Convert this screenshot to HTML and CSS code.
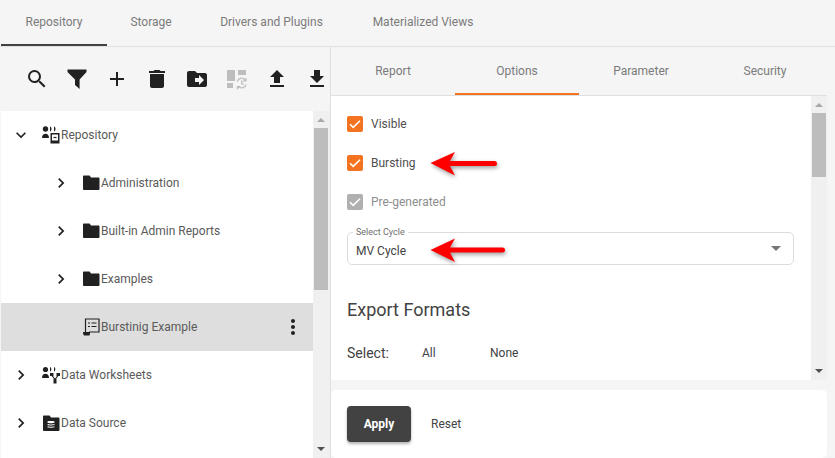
FILE: index.html
```html
<!DOCTYPE html>
<html lang="en">
<head>
<meta charset="utf-8">
<title>Repository</title>
<link rel="stylesheet" href="styles.css">
</head>
<body>
<nav class="top-tabs">
  <a class="top-tab active tw-106">Repository</a>
  <a class="top-tab tw-88">Storage</a>
  <a class="top-tab tw-153">Drivers and Plugins</a>
  <a class="top-tab tw-150">Materialized Views</a>
</nav>
<main class="main">
  <section class="left">
    <div class="toolbar">
      <svg class="tool" viewBox="0 0 24 24"><path d="M15.500 14h-.79l-.28-.27A6.470 6.470 0 0 0 16 9.500 6.500 6.500 0 1 0 9.500 16c1.610 0 3.090-.59 4.230-1.570l.27.28v.79l5 4.990L20.490 19l-4.990-5zm-6 0C7.010 14 5 11.990 5 9.500S7.010 5 9.500 5 14 7.010 14 9.500 11.990 14 9.500 14z"/></svg>
      <svg class="tool" viewBox="0 0 24 24"><path d="M2.500 2.500h19v2.600L14.600 12.500v9.500L10 18V12.500L2.500 5.100z"/></svg>
      <svg class="tool" viewBox="0 0 24 24"><path d="M19 13h-6v6h-2v-6H5v-2h6V5h2v6h6z"/></svg>
      <svg class="tool" viewBox="0 0 24 24"><path d="M5 19c0 1.100.9 2 2 2h10c1.100 0 2-.9 2-2V7H5v12zM20 4h-4.500l-1-1h-5l-1 1H4v2h16V4z"/></svg>
      <svg class="tool" viewBox="0 0 24 24"><path d="M20 6h-8l-2-2H4c-1.100 0-2 .9-2 2v12c0 1.100.9 2 2 2h16c1.100 0 2-.9 2-2V8c0-1.100-.9-2-2-2zm-6 12v-3h-4v-4h4V8l5 5-5 5z"/></svg>
      <svg class="tool" viewBox="0 0 24 24"><path class="dim" d="M2 3h8v11H2zM13 3h8v5h-8zM2 16h6v5H2z"/><path class="dim-line" d="M12.200 14.500a4.800 4.800 0 0 1 8.300-1.500M21.300 17.500a4.800 4.800 0 0 1-8.300 1.500"/><path class="dim" d="M21.500 10.500v4h-4zM11.800 23v-4h4z"/><path class="dim-line" d="M16.700 13.500v3l2 1.200"/></svg>
      <svg class="tool" viewBox="0 0 24 24"><path d="M5 20h14v-2H5v2zm0-10h4v6h6v-6h4l-7-7-7 7z"/></svg>
      <svg class="tool" viewBox="0 0 24 24"><path d="M19 9h-4V3H9v6H5l7 7 7-7zM5 18v2h14v-2H5z"/></svg>
    </div>
    <div class="tree-wrap">
      <ul class="tree">
        <li class="row">
          <svg class="chev" viewBox="-2.400 -2.400 28.800 28.800"><path d="M7.410 8.590 12 13.170l4.590-4.580L18 10l-6 6-6-6z"/></svg>
          <svg class="node" viewBox="0 0 20 20"><circle cx="4.500" cy="4" r="2.700"/><path d="M1 13c0-3 1.600-4.200 3.500-4.200S8 10 8 13zM9 1.500c2 .6 2 4.400 0 5zM13 1.500c2 .6 2 4.400 0 5zM9.500 8h9v10.500h-9zM11 9.500v6h6v-6z"/><path class="hollow" d="M12.500 12.500h3"/></svg>
          <span>Repository</span>
        </li>
        <li class="row indent">
          <svg class="chev" viewBox="-2.400 -2.400 28.800 28.800"><path d="M8.590 16.590 13.170 12 8.590 7.410 10 6l6 6-6 6z"/></svg>
          <svg class="node" viewBox="0 0 20 20"><path d="M3 2.500h5.500l1.500 2h7.500c.5 0 1 .5 1 1V16c0 .5-.5 1-1 1H3c-.5 0-1-.5-1-1V3.500c0-.5.5-1 1-1z"/></svg>
          <span>Administration</span>
        </li>
        <li class="row indent">
          <svg class="chev" viewBox="-2.400 -2.400 28.800 28.800"><path d="M8.590 16.590 13.170 12 8.590 7.410 10 6l6 6-6 6z"/></svg>
          <svg class="node" viewBox="0 0 20 20"><path d="M3 2.500h5.500l1.500 2h7.500c.5 0 1 .5 1 1V16c0 .5-.5 1-1 1H3c-.5 0-1-.5-1-1V3.500c0-.5.5-1 1-1z"/></svg>
          <span>Built-in Admin Reports</span>
        </li>
        <li class="row indent">
          <svg class="chev" viewBox="-2.400 -2.400 28.800 28.800"><path d="M8.590 16.590 13.170 12 8.590 7.410 10 6l6 6-6 6z"/></svg>
          <svg class="node" viewBox="0 0 20 20"><path d="M3 2.500h5.500l1.500 2h7.500c.5 0 1 .5 1 1V16c0 .5-.5 1-1 1H3c-.5 0-1-.5-1-1V3.500c0-.5.5-1 1-1z"/></svg>
          <span>Examples</span>
        </li>
        <li class="row indent selected">
          <span class="chev"></span>
          <svg class="node" viewBox="0 0 20 20"><path class="hollow" d="M4.500 15V2h13.500V15H8"/><path class="hollow" d="M7 6h2M10.500 6h5M7 9.500h2M10.500 9.500h5"/><path d="M2 15h7v1.500L8.500 18.500H3.500c-1.200 0-1.500-2-1.500-3.500z"/></svg>
          <span>Burstinig Example</span>
          <svg class="more" viewBox="0 0 24 24"><path d="M12 8c1.100 0 2-.9 2-2s-.9-2-2-2-2 .9-2 2 .9 2 2 2zm0 2c-1.100 0-2 .9-2 2s.9 2 2 2 2-.9 2-2-.9-2-2-2zm0 6c-1.100 0-2 .9-2 2s.9 2 2 2 2-.9 2-2-.9-2-2-2z"/></svg>
        </li>
        <li class="row">
          <svg class="chev" viewBox="-2.400 -2.400 28.800 28.800"><path d="M8.590 16.590 13.170 12 8.590 7.410 10 6l6 6-6 6z"/></svg>
          <svg class="node" viewBox="0 0 20 20"><circle cx="4.500" cy="4.500" r="2.600"/><path d="M1 13c0-3 1.600-4.200 3.500-4.200S8 10 8 13zM9 2c1.800.6 1.800 4 0 4.600zM13 2c1.800.6 1.800 4 0 4.600zM9 8h3.500v3H9zM15.500 8H19v3h-3.500zM12.500 14h3v4.500h-3z"/><path class="hollow" d="M11 10.500l3 4M17 10.500l-3 4"/></svg>
          <span>Data Worksheets</span>
        </li>
        <li class="row">
          <svg class="chev" viewBox="-2.400 -2.400 28.800 28.800"><path d="M8.590 16.590 13.170 12 8.590 7.410 10 6l6 6-6 6z"/></svg>
          <svg class="node" viewBox="0 0 20 20"><path fill-rule="evenodd" d="M3 2.500h5.500l1.500 2h7.500c.5 0 1 .5 1 1v11.500c0 .5-.5 1-1 1H3c-.5 0-1-.5-1-1V3.500c0-.5.5-1 1-1zM6.500 8.500v1.200c1 .6 6 .6 7 0V8.500c-1-.6-6-.6-7 0zM6.500 11v1c1 .6 6 .6 7 0v-1c-1 .6-6 .6-7 0zM6.500 13.200v1c1 .6 6 .6 7 0v-1c-1 .6-6 .6-7 0z"/></svg>
          <span>Data Source</span>
        </li>
      </ul>
      <div class="scrollbar tree-scroll">
        <span class="arrow-up"></span>
        <span class="thumb tree-thumb"></span>
        <span class="spacer"></span>
        <span class="arrow-down"></span>
      </div>
    </div>
  </section>
  <section class="right">
    <nav class="sub-tabs">
      <a class="sub-tab">Report</a>
      <a class="sub-tab active">Options</a>
      <a class="sub-tab">Parameter</a>
      <a class="sub-tab">Security</a>
    </nav>
    <div class="options-wrap">
      <div class="options">
        <label class="check-row"><span class="check on"><svg viewBox="0 0 16 16"><path d="M3 8.200l3.200 3.200L13 4.800"/></svg></span>Visible</label>
        <label class="check-row"><span class="check on"><svg viewBox="0 0 16 16"><path d="M3 8.200l3.200 3.200L13 4.800"/></svg></span>Bursting</label>
        <label class="check-row disabled"><span class="check off"><svg viewBox="0 0 16 16"><path d="M3 8.200l3.200 3.200L13 4.800"/></svg></span>Pre-generated</label>
        <div class="select">
          <span class="select-label">Select Cycle</span>
          <span class="select-value">MV Cycle</span>
          <span class="select-caret"></span>
        </div>
        <h2 class="section-title">Export Formats</h2>
        <div class="select-links">
          <span class="select-text">Select:</span>
          <a class="link link-all">All</a>
          <a class="link">None</a>
        </div>
      </div>
      <div class="scrollbar options-scroll">
        <span class="arrow-up"></span>
        <span class="thumb options-thumb"></span>
        <span class="spacer"></span>
        <span class="arrow-down"></span>
      </div>
    </div>
    <div class="footer">
      <button class="btn-apply">Apply</button>
      <a class="btn-reset">Reset</a>
    </div>
  </section>
</main>
<svg class="red-arrow arrow-one" viewBox="0 0 75 30"><path d="M0.500 12 L25 1 L20 10 H64.500 Q67 10 67 12.500 Q67 15 64.500 15 H20 L25 24.500 Z"/></svg>
<svg class="red-arrow arrow-two" viewBox="0 0 82 30"><path d="M0.500 12 L25 0.500 L20 9.500 H72.500 Q75 9.500 75 12 Q75 14.500 72.500 14.500 H20 L25 24 Z"/></svg>
</body>
</html>
```
FILE: styles.css
```css
* { box-sizing: border-box; }
html, body { height: 100%; }
body {
  margin: 0;
  width: 835px;
  height: 458px;
  overflow: hidden;
  background: #f5f5f5;
  font-family: Roboto, sans-serif;
  font-size: 12px;
  color: #424242;
  position: relative;
  padding-left: 1px;
}
a { color: inherit; text-decoration: none; }

.top-tabs {
  display: flex;
  height: 47px;
  margin-left: -1px;
  padding-left: 1px;
  border-bottom: 1px solid #e0e0e0;
}
.top-tab {
  display: flex;
  align-items: center;
  justify-content: center;
  height: 46px;
  padding-bottom: 3px;
  color: #7b7b7b;
}
.top-tab.active { border-bottom: 2px solid #424242; padding-bottom: 1px; }
.tw-106 { width: 106px; }
.tw-88 { width: 88px; }
.tw-153 { width: 153px; }
.tw-150 { width: 150px; }

.main { display: flex; height: 411px; }
.left {
  width: 330px;
  border-right: 1px solid #e0e0e0;
  display: flex;
  flex-direction: column;
}
.toolbar {
  height: 64px;
  padding: 0 8px 0 24px;
  display: flex;
  align-items: center;
  gap: 16px;
  flex: none;
}
.tool { width: 24px; height: 24px; fill: #212121; flex: none; }
.dim { fill: #bdbdbd; }
.dim-line { fill: none; stroke: #c4c4c4; stroke-width: 1.500; }

.tree-wrap { display: flex; flex: 1; min-height: 0; }
.tree {
  list-style: none;
  margin: 0;
  padding: 0;
  width: 312px;
  background: #fff;
}
.row {
  height: 48px;
  display: flex;
  align-items: center;
  padding-left: 8px;
  position: relative;
  color: #5a5a5a;
}
.row.indent { padding-left: 48px; }
.row.selected { background: #dedede; }
.chev { width: 24px; height: 24px; fill: #212121; flex: none; margin-right: 8px; }
.node { width: 20px; height: 20px; fill: #212121; flex: none; }
.hollow { fill: none; stroke: #212121; stroke-width: 1.200; }
.more { width: 24px; height: 24px; fill: #212121; position: absolute; right: 8px; top: 12px; }

.scrollbar {
  display: flex;
  flex-direction: column;
  align-items: center;
  background: #f0f0f0;
  flex: none;
}
.tree-scroll { width: 17px; }
.options-scroll { width: 16px; }
.thumb { background: #bdbdbd; width: 100%; flex: none; }
.tree-thumb { height: 162px; width: 14px; margin-left: -2px; }
.options-thumb { height: 64px; width: 14px; }
.spacer { flex: 1; }
.arrow-up, .arrow-down { width: 0; height: 0; border-left: 4px solid transparent; border-right: 4px solid transparent; flex: none; }
.arrow-up { border-bottom: 4px solid #a8a8a8; margin: 7px 0 6px; }
.arrow-down { border-top: 4px solid #505050; margin: 4px 0 7px; }
.tree-scroll .arrow-up, .tree-scroll .arrow-down { margin-left: -2px; }

.right { width: 496px; display: flex; flex-direction: column; }
.sub-tabs { display: flex; height: 49px; border-bottom: 1px solid #e0e0e0; flex: none; }
.sub-tab {
  width: 124px;
  height: 48px;
  display: flex;
  align-items: center;
  justify-content: center;
  color: #7b7b7b;
}
.sub-tab.active { border-bottom: 2px solid #f37321; padding-top: 2px; }

.options-wrap { display: flex; height: 284px; flex: none; }
.options { width: 480px; background: #fff; padding: 20px 16px 0; }
.check-row { height: 16px; margin-bottom: 23px; display: flex; align-items: center; gap: 8px; color: #4f4f4f; }
.check-row.disabled { color: #8e8e8e; }
.check {
  width: 16px;
  height: 16px;
  border-radius: 2px;
  display: flex;
}
.check.on { background: #f37321; }
.check.off { background: #b0b0b0; }
.check svg { width: 16px; height: 16px; fill: none; stroke: #fff; stroke-width: 1.600; }

.select {
  position: relative;
  height: 33px;
  margin-top: -1px;
  width: 447px;
  border: 1px solid #dcdcdc;
  border-radius: 5px;
  padding: 0 8px;
  display: flex;
  align-items: center;
}
.select-label {
  position: absolute;
  top: -6px;
  left: 5px;
  background: #fff;
  padding: 0 3px;
  font-size: 9px;
  line-height: 11px;
  color: #6e6e6e;
}
.select-value { color: #424242; padding-top: 4px; }
.select-caret {
  position: absolute;
  right: 12px;
  top: 13px;
  width: 0;
  height: 0;
  border-left: 5px solid transparent;
  border-right: 5px solid transparent;
  border-top: 5px solid #757575;
}
.section-title { margin: 33px 0 0; font-size: 18px; font-weight: 400; line-height: 24px; color: #424242; }
.select-links { display: flex; align-items: center; margin-top: 23px; height: 16px; }
.select-text { width: 75px; font-size: 14px; }
.link-all { width: 68px; }
.link { color: #424242; }

.footer {
  margin-top: 10px;
  height: 68px;
  background: #fff;
  border-radius: 5px;
  display: flex;
  align-items: center;
  padding: 0 16px;
}
.btn-apply {
  width: 64px;
  height: 36px;
  border: 0;
  border-radius: 4px;
  background: #424242;
  color: #fff;
  font: 700 12px Roboto, sans-serif;
  box-shadow: 0 2px 3px rgba(0,0,0,.3);
}
.btn-reset { margin-left: 20px; color: #424242; }

.red-arrow {
  position: absolute;
  fill: #f00;
  filter: drop-shadow(1px 2px 2px rgba(0,0,0,.4));
}
.arrow-one { left: 430px; top: 151px; width: 75px; height: 30px; }
.arrow-two { left: 430px; top: 238px; width: 82px; height: 30px; }
```
